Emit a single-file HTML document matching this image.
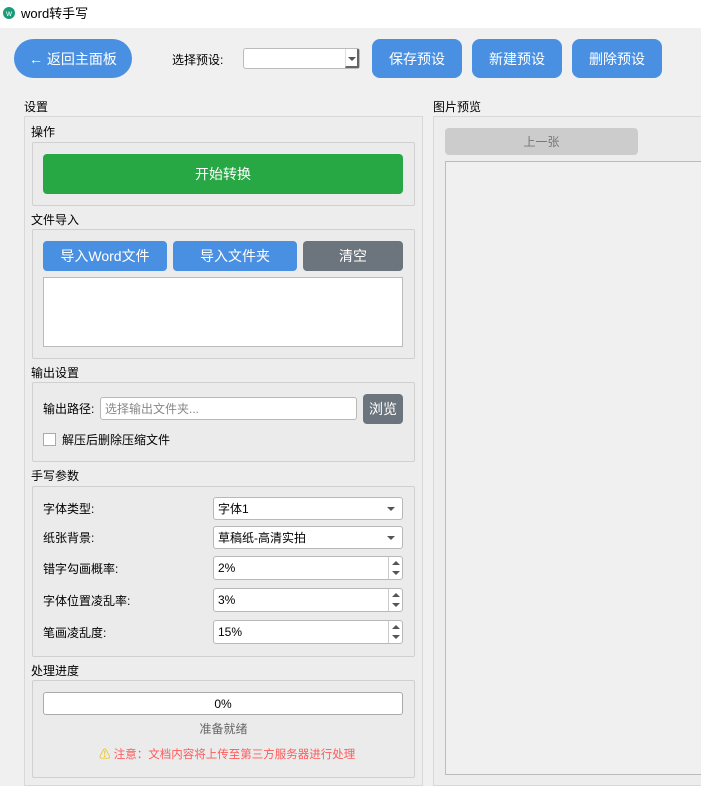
<!DOCTYPE html><html><head><meta charset="utf-8"><style>
*{box-sizing:border-box;margin:0;padding:0}
body{width:701px;height:781px;background:#f0f0f0;font-family:"Liberation Sans","Noto Sans CJK SC",sans-serif;font-size:12px;color:#000;position:relative;overflow:hidden}
.a{position:absolute}
.c{display:flex;align-items:center;justify-content:center}
.btn{background:#4a90e2;color:#fff;font-size:14px;border-radius:8px}
.lbl{position:absolute;font-size:12px;line-height:14px}
.box{position:absolute;border:1px solid #d0d0d0;background:#ebebeb;border-radius:2px}
.inp{position:absolute;background:#fff;border:1px solid #b8b8b8;border-radius:3px;padding-left:4px;display:flex;align-items:center;font-size:12px}
.arrow{position:absolute;right:7px;top:9px;width:0;height:0;border-left:4px solid transparent;border-right:4px solid transparent;border-top:4px solid #555}
.spin{position:absolute;right:0;top:0;bottom:0;width:14px;border-left:1px solid #ccc}
.spin:before{content:"";position:absolute;left:3px;top:4px;border-left:4px solid transparent;border-right:4px solid transparent;border-bottom:4px solid #555}
.spin:after{content:"";position:absolute;left:3px;bottom:4px;border-left:4px solid transparent;border-right:4px solid transparent;border-top:4px solid #555}
</style></head><body>
<div class="a" style="left:0;top:0;width:701px;height:28px;background:#fff"></div>
<div class="a c" style="left:3px;top:7px;width:12px;height:12px;border-radius:50%;background:#1a9b7a;color:#fff;font-size:8px">w</div>
<div class="lbl" style="left:21px;top:6px;font-size:13px;line-height:16px">word转手写</div>

<div class="a c btn" style="left:14px;top:39px;width:118px;height:39px;border-radius:20px">← 返回主面板</div>
<div class="lbl" style="left:172px;top:53px">选择预设:</div>
<div class="a" style="left:243px;top:48px;width:117px;height:21px;background:#fff;border:1px solid #bbb;border-radius:3px"><div class="a" style="right:0;top:0;width:14px;height:19px;border-left:1px solid #ddd;border-right:2px solid #666;border-bottom:2px solid #666"></div><div class="arrow" style="right:3px;top:8px"></div></div>
<div class="a c btn" style="left:372px;top:39px;width:90px;height:39px">保存预设</div>
<div class="a c btn" style="left:472px;top:39px;width:90px;height:39px">新建预设</div>
<div class="a c btn" style="left:572px;top:39px;width:90px;height:39px">删除预设</div>

<div class="lbl" style="left:24px;top:100px">设置</div>
<div class="a" style="left:24px;top:116px;width:399px;height:670px;border:1px solid #d8d8d8;background:#ededed"></div>

<div class="lbl" style="left:31px;top:125px">操作</div>
<div class="box" style="left:32px;top:142px;width:383px;height:64px"></div>
<div class="a c" style="left:43px;top:154px;width:360px;height:40px;background:#28a745;color:#fff;font-size:14px;border-radius:4px">开始转换</div>

<div class="lbl" style="left:31px;top:213px">文件导入</div>
<div class="box" style="left:32px;top:229px;width:383px;height:130px"></div>
<div class="a c btn" style="left:43px;top:241px;width:124px;height:30px;border-radius:4px">导入Word文件</div>
<div class="a c btn" style="left:173px;top:241px;width:124px;height:30px;border-radius:4px">导入文件夹</div>
<div class="a c btn" style="left:303px;top:241px;width:100px;height:30px;border-radius:4px;background:#6c757d">清空</div>
<div class="a" style="left:43px;top:277px;width:360px;height:70px;background:#fff;border:1px solid #bbb"></div>

<div class="lbl" style="left:31px;top:366px">输出设置</div>
<div class="box" style="left:32px;top:382px;width:383px;height:80px"></div>
<div class="lbl" style="left:43px;top:402px">输出路径:</div>
<div class="inp" style="left:100px;top:397px;width:257px;height:23px;color:#888">选择输出文件夹...</div>
<div class="a c" style="left:363px;top:394px;width:40px;height:30px;background:#6c757d;color:#fff;font-size:14px;border-radius:4px">浏览</div>
<div class="a" style="left:43px;top:433px;width:13px;height:13px;background:#fff;border:1px solid #aaa"></div>
<div class="lbl" style="left:62px;top:433px">解压后删除压缩文件</div>

<div class="lbl" style="left:31px;top:469px">手写参数</div>
<div class="box" style="left:32px;top:486px;width:383px;height:171px"></div>
<div class="lbl" style="left:43px;top:502px">字体类型:</div>
<div class="inp" style="left:213px;top:497px;width:190px;height:23px">字体1<div class="arrow"></div></div>
<div class="lbl" style="left:43px;top:531px">纸张背景:</div>
<div class="inp" style="left:213px;top:526px;width:190px;height:23px">草稿纸-高清实拍<div class="arrow"></div></div>
<div class="lbl" style="left:43px;top:562px">错字勾画概率:</div>
<div class="inp" style="left:213px;top:556px;width:190px;height:24px">2%<div class="spin"></div></div>
<div class="lbl" style="left:43px;top:594px">字体位置凌乱率:</div>
<div class="inp" style="left:213px;top:588px;width:190px;height:24px">3%<div class="spin"></div></div>
<div class="lbl" style="left:43px;top:626px">笔画凌乱度:</div>
<div class="inp" style="left:213px;top:620px;width:190px;height:24px">15%<div class="spin"></div></div>

<div class="lbl" style="left:31px;top:664px">处理进度</div>
<div class="box" style="left:32px;top:680px;width:383px;height:98px"></div>
<div class="a c" style="left:43px;top:692px;width:360px;height:23px;background:#fff;border:1px solid #aaa;border-radius:3px">0%</div>
<div class="lbl" style="left:0;width:447px;text-align:center;top:722px;color:#666">准备就绪</div>
<div class="lbl" style="left:99px;top:748px;color:#ff5a5a;font-size:11.5px"><span style="color:#e8c000">⚠</span> 注意：文档内容将上传至第三方服务器进行处理</div>

<div class="lbl" style="left:433px;top:100px">图片预览</div>
<div class="a" style="left:433px;top:116px;width:280px;height:670px;border:1px solid #d8d8d8;background:#ededed"></div>
<div class="a c" style="left:445px;top:128px;width:193px;height:27px;background:#cccccc;color:#777;border-radius:4px">上一张</div>
<div class="a" style="left:445px;top:161px;width:270px;height:614px;border:1px solid #bbb;background:#f0f0f0"></div>
</body></html>
